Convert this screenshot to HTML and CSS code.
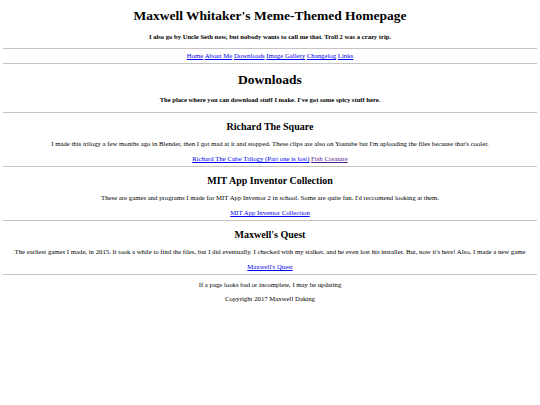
FILE: index.html
```html
<!DOCTYPE html>
<html>
<head>
<meta charset="utf-8">
<title>Downloads</title>
<link rel="stylesheet" href="styles.css">
</head>
<body>
<h1 class="title">Maxwell Whitaker's Meme-Themed Homepage</h1>
<h4 class="sub">I also go by Uncle Seth now, but nobody wants to call me that. Troll 2 was a crazy trip.</h4>
<hr>
<div class="nav"><a href="#">Home</a> <a href="#">About Me</a> <a href="#">Downloads</a> <a href="#">Image Gallery</a> <a href="#">Changelog</a> <a href="#">Links</a></div>
<hr>
<h1 class="page">Downloads</h1>
<h4 class="sub">The place where you can download stuff I make. I've got some spicy stuff here.</h4>
<hr>
<h2>Richard The Square</h2>
<p>I made this trilogy a few months ago in Blender, then I got mad at it and stopped. These clips are also on Youtube but I'm uploading the files because that's cooler.</p>
<div class="links"><a href="#">Richard The Cube Trilogy (Part one is lost)</a> <a href="#" class="visited">Fish Creature</a></div>
<hr>
<h2>MIT App Inventor Collection</h2>
<p>These are games and programs I made for MIT App Inventor 2 in school. Some are quite fun. I'd reccomend looking at them.</p>
<div class="links"><a href="#">MIT App Inventor Collection</a></div>
<hr>
<h2>Maxwell's Quest</h2>
<p>The earliest games I made, in 2015. It took a while to find the files, but I did eventually. I checked with my stalker, and he even lost his installer. But, now it's here! Also, I made a new game</p>
<div class="links"><a href="#">Maxwell's Quest</a></div>
<hr>
<p class="foot">If a page looks bad or incomplete, I may be updating</p>
<p class="foot">Copyright 2017 Maxwell Daking</p>
</body>
</html>
```
FILE: styles.css
```css
html { background: #fff; }
body {
  margin: 0 3px;
  padding: 0;
  font-family: "Liberation Serif", "Times New Roman", serif;
  font-size: 6.75px;
  line-height: 8px;
  color: #000;
  text-align: center;
}
h1 { font-size: 13.5px; line-height: 15.5px; margin: 8px 0 8.5px; }
h1.page { margin: 7.5px 0 8px; }
h2 { font-size: 10px; line-height: 11.6px; margin: 7.8px 0; }
.sub { font-size: 6.6px; line-height: 7.8px; margin: 9px 0 8px; }
p { margin: 6.75px 0; }
p.foot { margin: 6px 0; }
.nav, .links { margin: 0; }
hr {
  border: 0;
  border-top: 1px solid #c4c4c4;
  margin: 3px 0;
  height: 0;
}
a { color: #0000ee; }
a.visited { color: #551a8b; }
```
